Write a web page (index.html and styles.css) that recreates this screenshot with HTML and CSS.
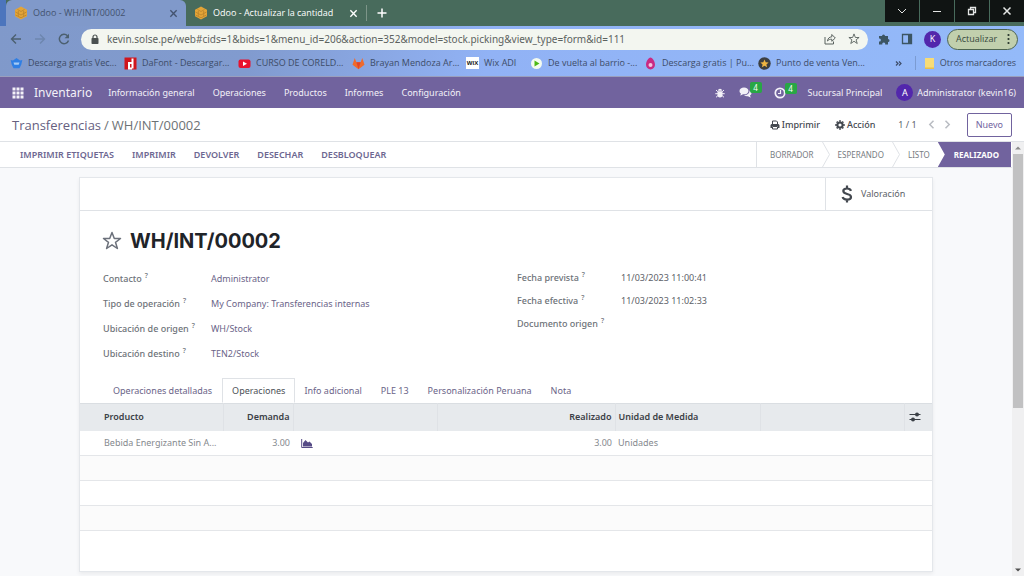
FILE: index.html
```html
<!DOCTYPE html>
<html lang="es">
<head>
<meta charset="utf-8">
<meta name="viewport" content="width=device-width, initial-scale=1">
<title>Odoo - WH/INT/00002</title>
<link rel="stylesheet" href="styles.css">
</head>
<body>
<svg class="sprite" aria-hidden="true">
  <symbol id="i-cube" viewBox="0 0 14 14"><path d="M7 .5 13 3.700v6.600L7 13.500 1 10.300V3.700z" fill="#e3a437"/><path d="M3.500 3.500l3.500 2 3.500-2M1.500 6l3 1.700L7 9l5.500-3M1.500 9 7 11.800 12.500 9M4.300 5v5M9.700 5v5" fill="none" stroke="#b9832b" stroke-width=".8"/></symbol>
  <symbol id="i-close" viewBox="0 0 10 10"><path d="M1.500 1.500l7 7M8.500 1.500l-7 7" fill="none" stroke="currentColor" stroke-width="1.500"/></symbol>
  <symbol id="i-star" viewBox="0 0 20 20"><path d="M10 1.500l2.300 6h6.200l-5 3.800 1.900 6.200L10 13.800l-5.400 3.700 1.900-6.200-5-3.800h6.200z" fill="none" stroke="currentColor" stroke-width="1.500" stroke-linejoin="round"/></symbol>
</svg>

<header class="chrome">
  <div class="tabstrip">
    <div class="tab tab-active">
      <svg class="ico14"><use href="#i-cube"/></svg>
      <span class="tab-title">Odoo - WH/INT/00002</span>
      <button class="bare" aria-label="Cerrar pestaña"><svg class="ico9"><use href="#i-close"/></svg></button>
    </div>
    <div class="tab">
      <svg class="ico14"><use href="#i-cube"/></svg>
      <span class="tab-title">Odoo - Actualizar la cantidad</span>
      <button class="bare" aria-label="Cerrar pestaña"><svg class="ico9"><use href="#i-close"/></svg></button>
    </div>
    <button class="bare new-tab" aria-label="Nueva pestaña"><svg class="ico10" viewBox="0 0 10 10"><path d="M5 .5v9M.5 5h9" stroke="currentColor" stroke-width="1.500"/></svg></button>
    <div class="window-controls">
      <button aria-label="Buscar pestañas"><svg class="ico10" viewBox="0 0 10 10"><path d="M1 3l4 4 4-4" fill="none" stroke="currentColor"/></svg></button>
      <button aria-label="Minimizar"><svg class="ico10" viewBox="0 0 10 10"><path d="M1 5.500h8" stroke="currentColor"/></svg></button>
      <button aria-label="Restaurar"><svg class="ico10" viewBox="0 0 10 10"><path d="M1.500 3.500h5v5h-5zM3.500 3V1.500h5v5H7" fill="none" stroke="currentColor" stroke-width="1.300"/></svg></button>
      <button aria-label="Cerrar"><svg class="ico10"><use href="#i-close"/></svg></button>
    </div>
  </div>

  <div class="toolbar">
    <div class="history">
      <button class="bare" aria-label="Atrás"><svg class="ico12" viewBox="0 0 12 12"><path d="M11 6H1.500M6 1.500 1.500 6 6 10.500" fill="none" stroke="#4c6070" stroke-width="1.400"/></svg></button>
      <button class="bare" aria-label="Adelante"><svg class="ico12" viewBox="0 0 12 12"><path d="M1 6h9.500M6 1.500 10.500 6 6 10.500" fill="none" stroke="#6d86ae" stroke-width="1.400"/></svg></button>
      <button class="bare" aria-label="Recargar"><svg class="ico12" viewBox="0 0 12 12"><path d="M10.500 7.500A4.700 4.700 0 1 1 9.500 2.800" fill="none" stroke="#4c6070" stroke-width="1.500"/><path d="M11 .8v4.400H6.600z" fill="#4c6070"/></svg></button>
    </div>
    <div class="address">
      <svg class="ico10" viewBox="0 0 10 10"><rect x="1.500" y="4" width="7" height="6" rx=".8" fill="#4a5050"/><path d="M3 4.500V3a2 2 0 0 1 4 0v1.500" fill="none" stroke="#4a5050" stroke-width="1.200"/></svg>
      <input class="url" type="text" aria-label="Dirección" value="kevin.solse.pe/web#cids=1&amp;bids=1&amp;menu_id=206&amp;action=352&amp;model=stock.picking&amp;view_type=form&amp;id=111">
      <button class="bare" aria-label="Compartir"><svg class="ico12" viewBox="0 0 12 12"><path d="M1 4v7h8.500V8.500M3.500 8c.3-2.600 1.800-4 4.300-4.200V1.500L11.300 5 7.800 8.300V6.200C6 6.200 4.700 6.600 3.500 8z" fill="none" stroke="#59625f"/></svg></button>
      <button class="bare" aria-label="Añadir a marcadores"><svg class="ico12"><use href="#i-star"/></svg></button>
    </div>
    <div class="tools">
      <button class="bare" aria-label="Extensiones"><svg class="ico12" viewBox="0 0 12 12"><path d="M1 3h3a1.500 1.500 0 1 1 3 0h3v3a1.500 1.500 0 1 1 0 3v2.500H7.200a1.500 1.500 0 1 0-2.900 0H1V8.500a1.500 1.500 0 1 0 0-2.900z" fill="#3c5563"/></svg></button>
      <button class="bare" aria-label="Panel lateral"><svg class="ico12" viewBox="0 0 12 12"><path d="M1.500 1.500h9v9h-9z" fill="none" stroke="#3c5563" stroke-width="1.300"/><path d="M7 1h4v10H7z" fill="#3c5563"/></svg></button>
      <button class="avatar" aria-label="Perfil">K</button>
      <button class="update">Actualizar<svg class="dots" viewBox="0 0 3 12"><circle cx="1.500" cy="2" r="1.100"/><circle cx="1.500" cy="6" r="1.100"/><circle cx="1.500" cy="10" r="1.100"/></svg></button>
    </div>
  </div>

  <nav class="bookmarks" aria-label="Marcadores">
    <a class="bookmark" href="#"><svg class="ico13" viewBox="0 0 13 13"><path d="M3 3.500 6.500 1 10 3.500l2.300-.5-1 4.500-1.800 3.800h-6L1.700 7.500.700 3z" fill="#2f7fe4"/><path d="M3.500 5.500h6l-.8 2.300H4.300z" fill="#a5cbf5"/></svg>Descarga gratis Vec...</a>
    <a class="bookmark" href="#"><svg class="ico13" viewBox="0 0 13 13"><path d="M.5.500h12v12H.5z" fill="#d0151c"/><path d="M8.500 1.500v10M8 6H5v5.500h3" fill="none" stroke="#fff" stroke-width="2"/></svg>DaFont - Descargar...</a>
    <a class="bookmark" href="#"><svg class="ico13" viewBox="0 0 13 13"><rect x=".5" y="2.500" width="12" height="8.500" rx="2" fill="#e8112d"/><path d="M5 4.500v4.500l4-2.250z" fill="#fff"/></svg>CURSO DE CORELD...</a>
    <a class="bookmark" href="#"><svg class="ico13" viewBox="0 0 13 13"><path d="M6.500 12.300.500 7.700 2.700 1l1.700 4.300h4.200L10.300 1l2.200 6.700z" fill="#ef6a2c"/><path d="M6.500 12.300 4.400 5.300h4.200z" fill="#e0432a"/></svg>Brayan Mendoza Ar...</a>
    <a class="bookmark bookmark-short" href="#"><span class="wix">WIX</span>Wix ADI</a>
    <a class="bookmark" href="#"><svg class="ico13" viewBox="0 0 13 13"><circle cx="6.500" cy="6.500" r="5.500" fill="#f4fbf0"/><path d="M4.500 3.500v6l5-3z" fill="#4cb916"/></svg>De vuelta al barrio -...</a>
    <a class="bookmark" href="#"><svg class="ico13" viewBox="0 0 13 13"><path d="M6.500.5c2 0 4.500 4 4.500 7.300a4.500 4.700 0 0 1-9 0C2 4.500 4.500.500 6.500.500z" fill="#c92a83"/><circle cx="6.500" cy="8" r="2" fill="#f5c4de"/></svg>Descarga gratis | Pu...</a>
    <a class="bookmark" href="#"><svg class="ico13" viewBox="0 0 13 13"><circle cx="6.500" cy="6.500" r="6.200" fill="#3c3f42"/><path d="M6.500 2.500l1.200 2.700 2.900.3-2.200 1.900.7 2.900-2.600-1.500-2.600 1.500.7-2.900-2.200-1.900 2.900-.3z" fill="#f0b642"/></svg>Punto de venta Ven...</a>
    <div class="bookmarks-end">
      <button class="bare more" aria-label="Más marcadores"><svg class="ico9" viewBox="0 0 9 9"><path d="M2 2.500l2 2-2 2M5 2.500l2 2-2 2" fill="none" stroke="currentColor" stroke-width="1.200"/></svg></button>
      <a class="bookmark-other" href="#"><svg class="ico13" viewBox="0 0 13 13"><path d="M2 1h9v9.500L9.500 12H2z" fill="#f7dc77"/><path d="M2 10.500h9V12H2z" fill="#e6c04e"/></svg>Otros marcadores</a>
    </div>
  </nav>
</header>

<nav class="navbar">
  <button class="bare" aria-label="Aplicaciones"><svg class="ico12" viewBox="0 0 12 12"><path d="M.5.500h3v3h-3zm4 0h3v3h-3zm4 0h3v3h-3zm-8 4h3v3h-3zm4 0h3v3h-3zm4 0h3v3h-3zm-8 4h3v3h-3zm4 0h3v3h-3zm4 0h3v3h-3z" fill="currentColor"/></svg></button>
  <a class="brand" href="#">Inventario</a>
  <div class="menu">
    <a href="#">Información general</a>
    <a href="#">Operaciones</a>
    <a href="#">Productos</a>
    <a href="#">Informes</a>
    <a href="#">Configuración</a>
  </div>
  <div class="systray">
    <button class="bare" aria-label="Depurar"><svg class="ico10" viewBox="0 0 10 10"><path d="M3 2.700a2 2 0 0 1 4 0zM2.500 3.200h5v3.500a2.500 2.700 0 0 1-5 0z" fill="currentColor"/><path d="M.3 5.700h9.400M1 2l1.800 1.700M9 2 7.200 3.700M1 9.300l2-1.800M9 9.300 7 7.500" stroke="currentColor"/></svg></button>
    <button class="bare counter" aria-label="Mensajes"><svg class="ico13" viewBox="0 0 13 13"><path d="M5 1.500c2.500 0 4.500 1.500 4.500 3.400S7.500 8.300 5 8.300l-1 0C3.200 9 2.200 9.400 1 9.400c.6-.6.9-1.200 1-1.800C1 7 .5 6 .5 4.900.5 3 2.500 1.500 5 1.500z" fill="currentColor"/><path d="M10.500 4.500c1.300.6 2 1.500 2 2.600s-.6 1.900-1.500 2.500c.1.600.4 1.200 1 1.800-1.200 0-2.200-.4-3-1.100-1.700.2-3.200-.2-4.200-1 3.200 0 6-1.900 5.700-4.800z" fill="currentColor"/></svg><span class="badge">4</span></button>
    <button class="bare counter" aria-label="Actividades"><svg class="ico12" viewBox="0 0 12 12"><circle cx="6" cy="6" r="4.700" fill="none" stroke="currentColor" stroke-width="1.700"/><path d="M6.500 3v3.500H4" fill="none" stroke="currentColor" stroke-width="1.200"/></svg><span class="badge">4</span></button>
    <a href="#">Sucursal Principal</a>
    <a class="user" href="#"><span class="avatar">A</span>Administrator (kevin16)</a>
  </div>
</nav>

<section class="control-panel">
  <div class="breadcrumb"><a href="#">Transferencias</a><span>/</span><span>WH/INT/00002</span></div>
  <div class="actions">
    <button class="bare action"><svg class="ico10" viewBox="0 0 10 10"><path d="M2.500 4V1h4l1 1v2M2.500 6.500h5V9h-5z" fill="none" stroke="currentColor"/><path d="M1.500 4h7l1 1v3H8V6H2v2H.5V5z" fill="currentColor"/></svg>Imprimir</button>
    <button class="bare action"><svg class="ico10" viewBox="0 0 10 10"><circle cx="5" cy="5" r="2.600" fill="none" stroke="currentColor" stroke-width="2"/><path d="M5 .3v1.500M5 8.200v1.500M.3 5h1.500M8.200 5h1.500M1.700 1.700l1 1M7.300 7.300l1 1M8.300 1.700l-1 1M2.700 7.300l-1 1" stroke="currentColor" stroke-width="1.800"/></svg>Acción</button>
    <span class="pager">1 / 1</span>
    <div class="pager-buttons">
      <button class="bare" aria-label="Anterior"><svg class="ico9" viewBox="0 0 9 9"><path d="M6.500.8 2.800 4.500l3.700 3.700" fill="none" stroke="currentColor" stroke-width="1.500"/></svg></button>
      <button class="bare" aria-label="Siguiente"><svg class="ico9" viewBox="0 0 9 9"><path d="M2.500.8l3.700 3.700-3.700 3.700" fill="none" stroke="currentColor" stroke-width="1.500"/></svg></button>
    </div>
    <button class="new">Nuevo</button>
  </div>
</section>

<div class="workspace">
  <main class="view">
    <div class="statusbar">
      <div class="status-buttons">
        <button class="bare">IMPRIMIR ETIQUETAS</button>
        <button class="bare">IMPRIMIR</button>
        <button class="bare">DEVOLVER</button>
        <button class="bare">DESECHAR</button>
        <button class="bare">DESBLOQUEAR</button>
      </div>
      <div class="stages">
        <button class="bare stage">BORRADOR</button>
        <svg class="chevron" viewBox="0 0 8 25" preserveAspectRatio="none"><path d="M.5 0l7 12.500L.5 25" fill="none" stroke="#dfe2e6"/></svg>
        <button class="bare stage">ESPERANDO</button>
        <svg class="chevron" viewBox="0 0 8 25" preserveAspectRatio="none"><path d="M.5 0l7 12.500L.5 25" fill="none" stroke="#dfe2e6"/></svg>
        <button class="bare stage">LISTO</button>
        <button class="bare stage stage-current" aria-current="step">REALIZADO</button>
      </div>
    </div>

    <article class="sheet">
      <div class="button-box">
        <button class="bare stat"><svg class="dollar" viewBox="0 0 12 18"><path d="M10 5.800C9.500 4.200 8 3.500 6 3.500c-2.200 0-3.700 1-3.700 2.600 0 3.900 7.700 1.900 7.700 5.800 0 1.700-1.600 2.700-4 2.700-2.300 0-3.900-.9-4.400-2.600M6 .5v3M6 14.500v3" fill="none" stroke="currentColor" stroke-width="2.200"/></svg>Valoración</button>
      </div>
      <div class="title">
        <button class="bare" aria-label="Favorito"><svg class="ico20"><use href="#i-star"/></svg></button>
        <h1>WH/INT/00002</h1>
      </div>
      <div class="groups">
        <dl class="group">
          <dt>Contacto<sup>?</sup></dt><dd><a href="#">Administrator</a></dd>
          <dt>Tipo de operación<sup>?</sup></dt><dd><a href="#">My Company: Transferencias internas</a></dd>
          <dt>Ubicación de origen<sup>?</sup></dt><dd><a href="#">WH/Stock</a></dd>
          <dt>Ubicación destino<sup>?</sup></dt><dd><a href="#">TEN2/Stock</a></dd>
        </dl>
        <dl class="group group-dates">
          <dt>Fecha prevista<sup>?</sup></dt><dd>11/03/2023 11:00:41</dd>
          <dt>Fecha efectiva<sup>?</sup></dt><dd>11/03/2023 11:02:33</dd>
          <dt>Documento origen<sup>?</sup></dt><dd></dd>
        </dl>
      </div>
      <div class="notebook" role="tablist">
        <button class="bare page-tab" role="tab">Operaciones detalladas</button>
        <button class="bare page-tab page-tab-active" role="tab" aria-selected="true">Operaciones</button>
        <button class="bare page-tab" role="tab">Info adicional</button>
        <button class="bare page-tab" role="tab">PLE 13</button>
        <button class="bare page-tab" role="tab">Personalización Peruana</button>
        <button class="bare page-tab" role="tab">Nota</button>
      </div>
      <table class="lines">
        <colgroup><col class="c-product"><col class="c-demand"><col class="c-chart"><col class="c-done"><col class="c-unit"><col class="c-extra"><col class="c-options"></colgroup>
        <thead>
          <tr><th>Producto</th><th class="num">Demanda</th><th></th><th class="num">Realizado</th><th>Unidad de Medida</th><th></th>
          <th><button class="bare" aria-label="Columnas opcionales"><svg class="ico12" viewBox="0 0 12 12"><path d="M.5 3.500h11M.5 8.500h11" stroke="currentColor" stroke-width="1.200"/><circle cx="8" cy="3.500" r="2" fill="currentColor"/><circle cx="4" cy="8.500" r="2" fill="currentColor"/></svg></button></th></tr>
        </thead>
        <tbody>
          <tr><td>Bebida Energizante Sin A...</td><td class="num">3.00</td><td><button class="bare chart" aria-label="Previsión"><svg class="ico12" viewBox="0 0 12 12"><path d="M.7 2v8.500h11" fill="none" stroke="currentColor"/><path d="M2 9.500V6l2.500-3L7 5.500 8.500 4.500 11 7v2.500z" fill="currentColor"/></svg></button></td><td class="num">3.00</td><td>Unidades</td><td></td><td></td></tr>
          <tr><td colspan="7"></td></tr>
          <tr><td colspan="7"></td></tr>
          <tr><td colspan="7"></td></tr>
        </tbody>
      </table>
    </article>
  </main>
  <div class="scrollbar" aria-hidden="true">
    <svg class="scroll-arrow" viewBox="0 0 12 12"><path d="M3 7.500 6 4.500l3 3z" fill="#8c8c8c"/></svg>
    <div class="scroll-track"><div class="scroll-thumb"></div></div>
    <svg class="scroll-arrow" viewBox="0 0 12 12"><path d="M3 4.500l3 3 3-3z" fill="#505050"/></svg>
  </div>
</div>
</body>
</html>
```
FILE: styles.css
```css
* { box-sizing: border-box; }

body {
  margin: 0;
  height: 100vh;
  display: flex;
  flex-direction: column;
  overflow: hidden;
  background: #f8f9fb;
  color: #5c6168;
  font: 9px/14px "Noto Sans", "Open Sans", sans-serif;
}

a { color: inherit; text-decoration: none; white-space: nowrap; }
button, input { font: inherit; color: inherit; }
button { white-space: nowrap; cursor: pointer; }
.bare { padding: 0; border: 0; background: none; display: flex; align-items: center; }
svg { display: block; flex: none; }
.sprite { position: absolute; width: 0; height: 0; }
.ico9 { width: 9px; height: 9px; }
.ico10 { width: 10px; height: 10px; }
.ico12 { width: 12px; height: 12px; }
.ico13 { width: 13px; height: 13px; }
.ico14 { width: 14px; height: 14px; }
.ico20 { width: 20px; height: 20px; }

/* Browser window */
.chrome {
  background: linear-gradient(100deg, #8099ca 0%, #819bcf 25%, #91b2f5 48%, #94baf9 100%);
  color: #3d4c68;
  border-bottom: 1px solid #9a9fbd;
  font-family: "Open Sans", "Noto Sans", sans-serif;
}
.tabstrip { display: flex; height: 26px; padding-left: 6px; background: #486b5c; box-shadow: inset 6px 0 #4c75bd; }
.tab { display: flex; align-items: center; gap: 5px; width: 180px; padding: 0 8px; color: #fff; }
.tab-active { background: #8099ca; color: #43536f; border-radius: 6px 6px 0 0; }
.tab-title { flex: 1; white-space: nowrap; }
.new-tab { height: 16px; margin-top: 5px; padding: 0 10px; border-left: 1px solid #7d9589; color: #fff; }
.window-controls { display: flex; margin-left: auto; height: 22px; gap: 1px; }
.window-controls button { width: 34px; border: 0; padding: 0; background: #101413; color: #e4e6e5; display: grid; place-items: center; }

.toolbar { display: flex; align-items: center; height: 26px; padding: 0 6px 0 10px; }
.history { display: flex; gap: 12px; width: 71px; }
.address { flex: 1; display: flex; align-items: center; gap: 12px; height: 21px; padding: 0 8px 0 9px; border-radius: 11px; background: #f3f6f0; color: #59625f; }
.url { flex: 1; min-width: 0; margin-left: -5px; padding: 0; border: 0; background: none; color: #5c6260; font-family: "Noto Sans", sans-serif; font-size: 10px; outline: 0; }
.tools { display: flex; align-items: center; gap: 11px; padding-left: 10px; }
.avatar { display: grid; place-items: center; width: 17px; height: 17px; padding: 0; border: 0; border-radius: 50%; background: #5227ac; color: #fff; font-size: 9px; }
.update { display: flex; align-items: center; justify-content: space-between; width: 71px; height: 21px; margin-left: -5px; padding: 0 7px 0 8px; border: 1px solid #4d6450; border-radius: 11px; background: #c1cfad; color: #36483d; }
.dots { width: 3px; height: 12px; fill: #26332b; }

.bookmarks { display: flex; align-items: center; height: 24px; padding: 0 8px 2px 10px; }
.bookmark, .bookmark-other { display: flex; align-items: center; gap: 5px; }
.bookmark { width: 114px; }
.bookmark-short { width: 64px; }
.wix { width: 13px; height: 12px; background: #fff; color: #111; font: bold 6px/12px "Liberation Sans", sans-serif; text-align: center; }
.bookmarks-end { display: flex; align-items: center; margin-left: auto; gap: 12px; }
.bookmark-other { padding-left: 7px; border-left: 1px solid #7b9bd2; }
.bookmark-other { gap: 4px; }

/* Application menu */
.navbar { display: flex; align-items: center; height: 31px; padding: 0 8px 0 12px; background: #71639e; color: #f3f1f8; }
.brand { margin-left: 10px; font-size: 12px; }
.menu { display: flex; gap: 18px; margin-left: 16px; }
.systray { display: flex; align-items: center; gap: 14px; margin-left: auto; }
.counter { position: relative; margin-right: 8px; }
.badge { position: absolute; left: 11px; top: -4px; width: 12px; height: 11px; border-radius: 2px; background: #28a745; color: #fff; font-size: 8px; line-height: 11px; }
.user { display: flex; align-items: center; gap: 4px; }

.control-panel { display: flex; align-items: center; justify-content: space-between; height: 34px; padding: 0 12px; border-bottom: 1px solid #dfe2e6; background: #fff; }
.breadcrumb { display: flex; gap: 3px; color: #6d7275; font: 13px/18px "Open Sans", sans-serif; white-space: nowrap; }
.breadcrumb a { color: #66607f; }
.actions { display: flex; align-items: center; gap: 15px; }
.action { gap: 2px; color: #43484f; font-weight: 500; }
.pager { margin-left: 8px; }
.pager-buttons { display: flex; gap: 7px; margin-left: -5px; color: #b9bcc2; }
.new { height: 24px; padding: 0 8px; border: 1px solid #71639e; border-radius: 2px; background: #fff; color: #71639e; }

/* Form view */
.workspace { flex: 1; min-height: 0; display: flex; }
.view { flex: 1; min-width: 0; overflow: hidden; }
.statusbar { display: flex; justify-content: space-between; height: 26px; padding: 0 1px 0 20px; border-bottom: 1px solid #dfe2e6; background: #fff; }
.status-buttons { display: flex; gap: 18px; color: #6d6791; font-weight: 600; }
.stages { display: flex; border-left: 1px solid #dfe2e6; font-size: 8px; color: #777c82; }
.stage { padding: 0 8px; }
.stage:first-child { padding-left: 13px; }
.chevron { width: 8px; height: 25px; }
.stage-current { padding: 0 12px 0 16px; background: #71639e; color: #fff; font-weight: 700; clip-path: polygon(0 0, 100% 0, 100% 100%, 0 100%, 7px 50%); }

.sheet { margin: 9px 79px 0; height: 395px; border: 1px solid #e4e7eb; background: #fff; box-shadow: 0 2px 4px #0000000f; }
.button-box { display: flex; justify-content: flex-end; height: 33px; border-bottom: 1px solid #dfe2e6; }
.stat { gap: 8px; width: 107px; padding-left: 15px; border-left: 1px solid #dfe2e6; }
.dollar { width: 12px; height: 18px; color: #43484f; }
.title { display: flex; align-items: center; gap: 8px; padding: 18px 22px 0; color: #6c717b; }
h1 { margin: 0; color: #1f2429; font: 700 20px/24px Inter, sans-serif; }
.groups { display: grid; grid-template-columns: 1fr 1fr; padding: 13px 23px 0; align-items: start; }
.group { display: grid; grid-template-columns: 108px 1fr; grid-auto-rows: 25px; align-items: center; margin: 0; }
.group-dates { grid-template-columns: 104px 1fr; grid-auto-rows: 23px; margin-left: 11px; }
dt { font-weight: 500; color: #6d7278; white-space: nowrap; }
dd { margin: 0; color: #5c6168; }
dd a { color: #6a6488; }
sup { margin-left: 3px; font-size: 7px; line-height: 0; }

.notebook { display: flex; height: 25px; margin-top: 12px; padding-left: 24px; color: #6a6488; }
.page-tab { padding: 0 9px 0 8px; border: 1px solid transparent; }
.page-tab-active { padding: 0 9px; border-color: #dfe2e6 #dfe2e6 #fff; background: #fff; color: #4c5157; }

.lines { width: 100%; border-collapse: collapse; table-layout: fixed; }
.c-product { width: 143px; }
.c-demand { width: 70px; }
.c-chart { width: 144px; }
.c-done { width: 178px; }
.c-unit { width: 145px; }
.c-options { width: 28px; }
th, td { padding: 0 3px; text-align: left; white-space: nowrap; }
th:first-child, td:first-child { padding-left: 24px; }
th { height: 27px; background: #e7eaed; color: #3b4046; font-weight: 600; border-right: 1px solid #dfe2e6; border-top: 1px solid #dadee2; }
th:last-child { padding-left: 4px; border-right: 0; }
td { height: 25px; border-bottom: 1px solid #e4e6e9; color: #85898e; }
tbody tr:nth-child(even) { background: #fbfbfb; }
.num { text-align: right; }
.chart { margin-left: 5px; color: #564b86; }

.scrollbar { display: flex; flex-direction: column; width: 12px; background: #f0f0f1; }
.scroll-arrow { width: 12px; height: 12px; }
.scroll-track { flex: 1; }
.scroll-thumb { width: 10px; height: 62%; margin: 0 auto; background: #c1c1c2; }
```
